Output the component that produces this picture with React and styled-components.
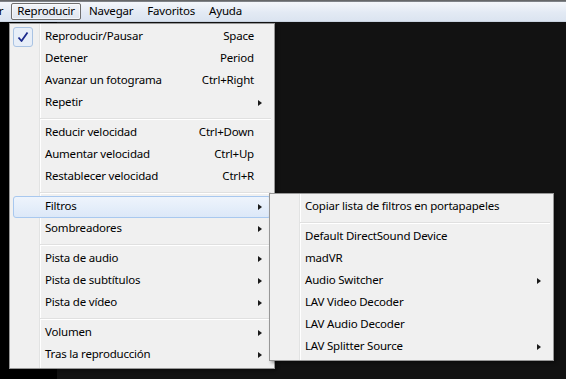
import React from 'react';
import styled, { createGlobalStyle } from 'styled-components';

const Global = createGlobalStyle`
  html, body { margin: 0; padding: 0; background: #000; overflow: hidden; }
  body { width: 566px; height: 379px; font-family: "Noto Sans", "Open Sans", sans-serif; font-size: 11.5px; letter-spacing: -0.2px; color: #000; }
`;

const Window = styled.div`
  width: 566px;
  height: 379px;
  display: flex;
  flex-direction: column;
  background: #000;
`;

const TitleEdge = styled.div`
  height: 2px;
  background: linear-gradient(to bottom, #5a5a5a, #8a8f96);
`;

const MenuBar = styled.div`
  height: 19px;
  display: flex;
  align-items: center;
  background: linear-gradient(to bottom, #f4f7fb 0%, #e3eaf4 55%, #dbe4f0 100%);
  border-bottom: 1px solid #c9d3e0;
  overflow: hidden;
  white-space: nowrap;
`;

const BarItem = styled.div`
  height: 15px;
  line-height: 14px;
  margin-top: -1px;
  padding: 0 5px;
  margin-left: 1px;
  margin-right: 1px;
  border: 1px solid ${p => (p.$open ? '#6e6e6e' : 'transparent')};
  border-radius: 2px;
  background: ${p => (p.$open ? 'linear-gradient(to bottom, #f2f5f9, #dfe5ee)' : 'transparent')};
  box-shadow: ${p => (p.$open ? 'inset 0 0 0 1px rgba(255,255,255,0.6)' : 'none')};
  &:first-child { margin-left: -20px; }
`;

const Screen = styled.div`
  flex: 1;
  position: relative;
  display: flex;
  padding-left: 57px;
`;

const Video = styled.div`
  flex: 1;
  background: #121212;
`;

const Menu = styled.div`
  position: absolute;
  left: ${p => p.$left}px;
  top: ${p => p.$top}px;
  width: ${p => p.$width}px;
  box-sizing: border-box;
  padding: 2px 0;
  border: 1px solid #979797;
  background: linear-gradient(to right, #f0f0f0 29px, #e2e3e3 29px, #e2e3e3 30px, #ffffff 30px, #ffffff 31px, #f0f0f0 31px);
  box-shadow: 2px 2px 3px rgba(0, 0, 0, 0.35);
  z-index: ${p => p.$z || 1};
`;

const Item = styled.div`
  position: relative;
  height: 22px;
  margin: 0 3px;
  padding-bottom: 2px;
  box-sizing: border-box;
  display: grid;
  grid-template-columns: 31px 1fr auto 16px;
  align-items: center;
  border: 1px solid ${p => (p.$hot ? '#a8c8ef' : 'transparent')};
  border-radius: 3px;
  background: ${p => (p.$hot ? 'linear-gradient(to bottom, #eef4fc, #dce8f8)' : 'transparent')};
`;

const Icon = styled.div`
  height: 20px;
  width: 20px;
  margin-left: -1px;
  margin-bottom: -2px;
  box-sizing: border-box;
  display: flex;
  align-items: center;
  justify-content: center;
  border: 1px solid ${p => (p.$checked ? '#a9c3e3' : 'transparent')};
  border-radius: 3px;
  background: ${p => (p.$checked ? '#e7eef8' : 'transparent')};
`;

const Label = styled.span`
  white-space: nowrap;
  line-height: 18px;
`;

const Shortcut = styled.span`
  white-space: nowrap;
  text-align: right;
  line-height: 18px;
`;

const Arrow = styled.span`
  width: 0;
  height: 0;
  margin-left: 4px;
  margin-bottom: -2px;
  border-top: 3.5px solid transparent;
  border-bottom: 3.5px solid transparent;
  border-left: 4px solid #1a1a1a;
`;

const Separator = styled.div`
  height: 8px;
  padding-top: 4px;
  box-sizing: border-box;
  margin: 0 3px 0 30px;
  &::before {
    content: '';
    display: block;
    height: 1px;
    background: #e0e0e0;
    border-bottom: 1px solid #ffffff;
  }
`;

const Check = () => (
  <svg width="12" height="12" viewBox="0 0 12 12">
    <path d="M1.5 6.5 L4.5 10 L10.5 1.5" fill="none" stroke="#1b2a8c" strokeWidth="1.8" strokeLinejoin="round" />
  </svg>
);

const MenuRow = ({ label, shortcut, sub, checked, hot }) => (
  <Item $hot={hot}>
    <Icon $checked={checked}>{checked && <Check />}</Icon>
    <Label>{label}</Label>
    <Shortcut>{shortcut}</Shortcut>
    {sub ? <Arrow /> : <span />}
  </Item>
);

const main = [
  [
    { label: 'Reproducir/Pausar', shortcut: 'Space', checked: true },
    { label: 'Detener', shortcut: 'Period' },
    { label: 'Avanzar un fotograma', shortcut: 'Ctrl+Right' },
    { label: 'Repetir', sub: true },
  ],
  [
    { label: 'Reducir velocidad', shortcut: 'Ctrl+Down' },
    { label: 'Aumentar velocidad', shortcut: 'Ctrl+Up' },
    { label: 'Restablecer velocidad', shortcut: 'Ctrl+R' },
  ],
  [
    { label: 'Filtros', sub: true, hot: true },
    { label: 'Sombreadores', sub: true },
  ],
  [
    { label: 'Pista de audio', sub: true },
    { label: 'Pista de subtítulos', sub: true },
    { label: 'Pista de vídeo', sub: true },
  ],
  [
    { label: 'Volumen', sub: true },
    { label: 'Tras la reproducción', sub: true },
  ],
];

const filters = [
  [{ label: 'Copiar lista de filtros en portapapeles' }],
  [
    { label: 'Default DirectSound Device' },
    { label: 'madVR' },
    { label: 'Audio Switcher', sub: true },
    { label: 'LAV Video Decoder' },
    { label: 'LAV Audio Decoder' },
    { label: 'LAV Splitter Source', sub: true },
  ],
];

const renderGroups = groups =>
  groups.map((g, i) => (
    <React.Fragment key={i}>
      {i > 0 && <Separator />}
      {g.map(it => <MenuRow key={it.label} {...it} />)}
    </React.Fragment>
  ));

export default function App() {
  return (
    <Window>
      <Global />
      <TitleEdge />
      <MenuBar>
        <BarItem>Ver</BarItem>
        <BarItem $open>Reproducir</BarItem>
        <BarItem>Navegar</BarItem>
        <BarItem>Favoritos</BarItem>
        <BarItem>Ayuda</BarItem>
      </MenuBar>
      <Screen>
        <Video />
        <Menu $left={9} $top={1} $width={266}>{renderGroups(main)}</Menu>
        <Menu $left={269} $top={171} $width={285} $z={2}>{renderGroups(filters)}</Menu>
      </Screen>
    </Window>
  );
}
